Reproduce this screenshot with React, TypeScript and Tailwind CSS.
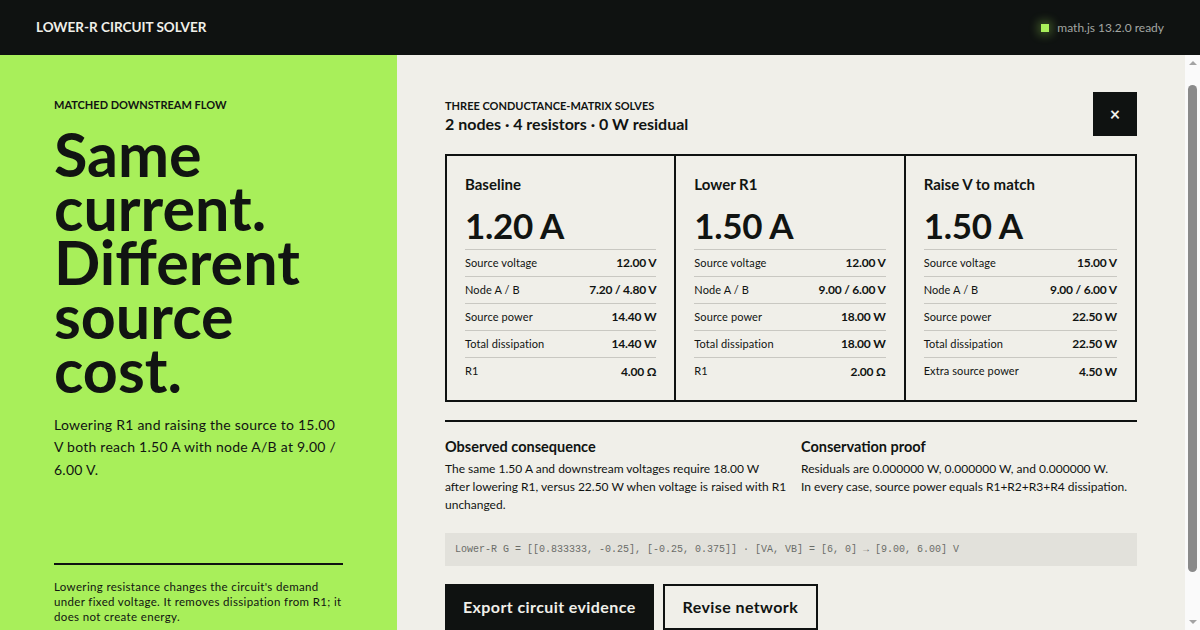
const cards = [
  {
    title: "Baseline",
    current: "1.20 A",
    rows: [
      ["Source voltage", "12.00 V"],
      ["Node A / B", "7.20 / 4.80 V"],
      ["Source power", "14.40 W"],
      ["Total dissipation", "14.40 W"],
      ["R1", "4.00 Ω"],
    ],
  },
  {
    title: "Lower R1",
    current: "1.50 A",
    rows: [
      ["Source voltage", "12.00 V"],
      ["Node A / B", "9.00 / 6.00 V"],
      ["Source power", "18.00 W"],
      ["Total dissipation", "18.00 W"],
      ["R1", "2.00 Ω"],
    ],
  },
  {
    title: "Raise V to match",
    current: "1.50 A",
    rows: [
      ["Source voltage", "15.00 V"],
      ["Node A / B", "9.00 / 6.00 V"],
      ["Source power", "22.50 W"],
      ["Total dissipation", "22.50 W"],
      ["Extra source power", "4.50 W"],
    ],
  },
];

function SolveCard({ title, current, rows, last }: { title: string; current: string; rows: string[][]; last: boolean }) {
  return (
    <div className={"px-[18px] pt-[18px] pb-[15px] " + (last ? "" : "border-r-2 border-[#0f1211]")}>
      <h3 className="text-[15px] font-bold leading-[20px]">{title}</h3>
      <div className="mt-[13px] text-[35px] font-bold leading-[36px] tracking-[-0.3px]">{current}</div>
      <div className="mt-[6px] border-t border-[#c9c8c2]">
        {rows.map(([label, value]) => (
          <div key={label} className="flex h-[27px] items-center justify-between border-b border-[#c9c8c2] last:border-b-0">
            <span className="text-[11px] tracking-[0.1px]">{label}</span>
            <span className="text-[12px] font-bold tracking-[-0.2px]">{value}</span>
          </div>
        ))}
      </div>
    </div>
  );
}

// classic scrollbar strip drawn next to the scrolling column
function ScrollStrip() {
  return (
    <div className="flex w-[15px] shrink-0 flex-col items-center bg-[#fafafa] pt-[6px] pb-[6px]">
      <div className="h-0 w-0 border-x-[4px] border-b-[4px] border-x-transparent border-b-[#a3a3a3]"></div>
      <div className="mt-[20px] w-[9px] flex-1 rounded-full bg-[#8a8a8a] mb-[48px]"></div>
      <div className="h-0 w-0 border-x-[4px] border-t-[4px] border-x-transparent border-t-[#a3a3a3]"></div>
    </div>
  );
}

export default function App() {
  return (
    <div className="flex h-[630px] w-[1200px] flex-col overflow-hidden bg-[#f0efe9] text-[#111412] font-['Lato',sans-serif]">
      <header className="flex h-[55px] shrink-0 items-center justify-between bg-[#0f1211] px-[36px]">
        <span className="text-[13.5px] font-bold text-[#f0efe9]">LOWER-R CIRCUIT SOLVER</span>
        <span className="flex items-center gap-[8px] text-[12px] text-[#a3a6a2]">
          <span className="h-[8px] w-[8px] bg-[#a8ef5a] shadow-[0_0_10px_3px_rgba(168,239,90,0.3)]"></span>
          math.js 13.2.0 ready
        </span>
      </header>

      <div className="flex min-h-0 flex-1">
        <aside className="flex w-[397px] shrink-0 flex-col bg-[#a8ef5a] px-[54px] pt-[42px] pb-[6px]">
          <p className="text-[11px] font-bold">MATCHED DOWNSTREAM FLOW</p>
          <h1 className="mt-[13px] text-[61px] font-bold leading-[54px]">
            <span className="block">Same</span>
            <span className="block">current.</span>
            <span className="block">Different</span>
            <span className="block">source</span>
            <span className="block">cost.</span>
          </h1>
          <p className="mt-[17px] text-[14px] leading-[22.5px] tracking-[0.25px]">
            Lowering R1 and raising the source to 15.00 V both reach 1.50 A with node A/B at 9.00 / 6.00 V.
          </p>
          <div className="mt-auto border-t-2 border-[#0f1211] pt-[14px]">
            <p className="text-[11.5px] leading-[15px] tracking-[0.35px]">
              Lowering resistance changes the circuit's demand under fixed voltage. It removes dissipation from R1; it does not create energy.
            </p>
          </div>
        </aside>

        <main className="flex-1 overflow-hidden px-[48px] pt-[43px]">
          <div className="flex items-start justify-between">
            <div>
              <p className="text-[11px] font-bold leading-[16px]">THREE CONDUCTANCE-MATRIX SOLVES</p>
              <p className="text-[16px] font-bold leading-[20px]">2 nodes · 4 resistors · 0 W residual</p>
            </div>
            <button className="-mt-[6px] flex h-[44px] w-[44px] items-center justify-center bg-[#0f1211] text-[18px] font-bold text-[#f0efe9]">
              ×
            </button>
          </div>

          <div className="mt-[18px] grid grid-cols-3 border-2 border-[#0f1211]">
            {cards.map((c, i) => (
              <SolveCard key={c.title} {...c} last={i === 2} />
            ))}
          </div>

          <div className="mt-[18px] grid grid-cols-2 gap-x-[20px] border-t-2 border-[#0f1211] pt-[15px]">
            <div>
              <h4 className="text-[14.5px] font-bold leading-[20px]">Observed consequence</h4>
              <p className="mt-[3px] text-[12px] leading-[18px]">
                <span className="block whitespace-nowrap">The same 1.50 A and downstream voltages require 18.00 W</span>
                <span className="block whitespace-nowrap">after lowering R1, versus 22.50 W when voltage is raised with R1</span>
                <span className="block">unchanged.</span>
              </p>
            </div>
            <div>
              <h4 className="text-[14.5px] font-bold leading-[20px]">Conservation proof</h4>
              <p className="mt-[3px] text-[12px] leading-[18px]">
                <span className="block whitespace-nowrap">Residuals are 0.000000 W, 0.000000 W, and 0.000000 W.</span>
                <span className="block whitespace-nowrap">In every case, source power equals R1+R2+R3+R4 dissipation.</span>
              </p>
            </div>
          </div>

          <div className="mt-[19px] bg-[#e2e1db] px-[10px] py-[10px] font-['Liberation_Mono',monospace] text-[10px] leading-[13px] text-[#6b6d69]">
            Lower-R G = [[0.833333, -0.25], [-0.25, 0.375]] · [VA, VB] = [6, 0] → [9.00, 6.00] V
          </div>

          <div className="mt-[18px] flex gap-[9px]">
            <button className="h-[46px] bg-[#0f1211] px-[18px] text-[16px] font-bold tracking-[0.4px] text-[#f0efe9]">
              Export circuit evidence
            </button>
            <button className="h-[46px] border-2 border-[#0f1211] px-[18px] text-[16px] font-bold tracking-[0.4px]">
              Revise network
            </button>
          </div>
        </main>

        <ScrollStrip />
      </div>
    </div>
  );
}
